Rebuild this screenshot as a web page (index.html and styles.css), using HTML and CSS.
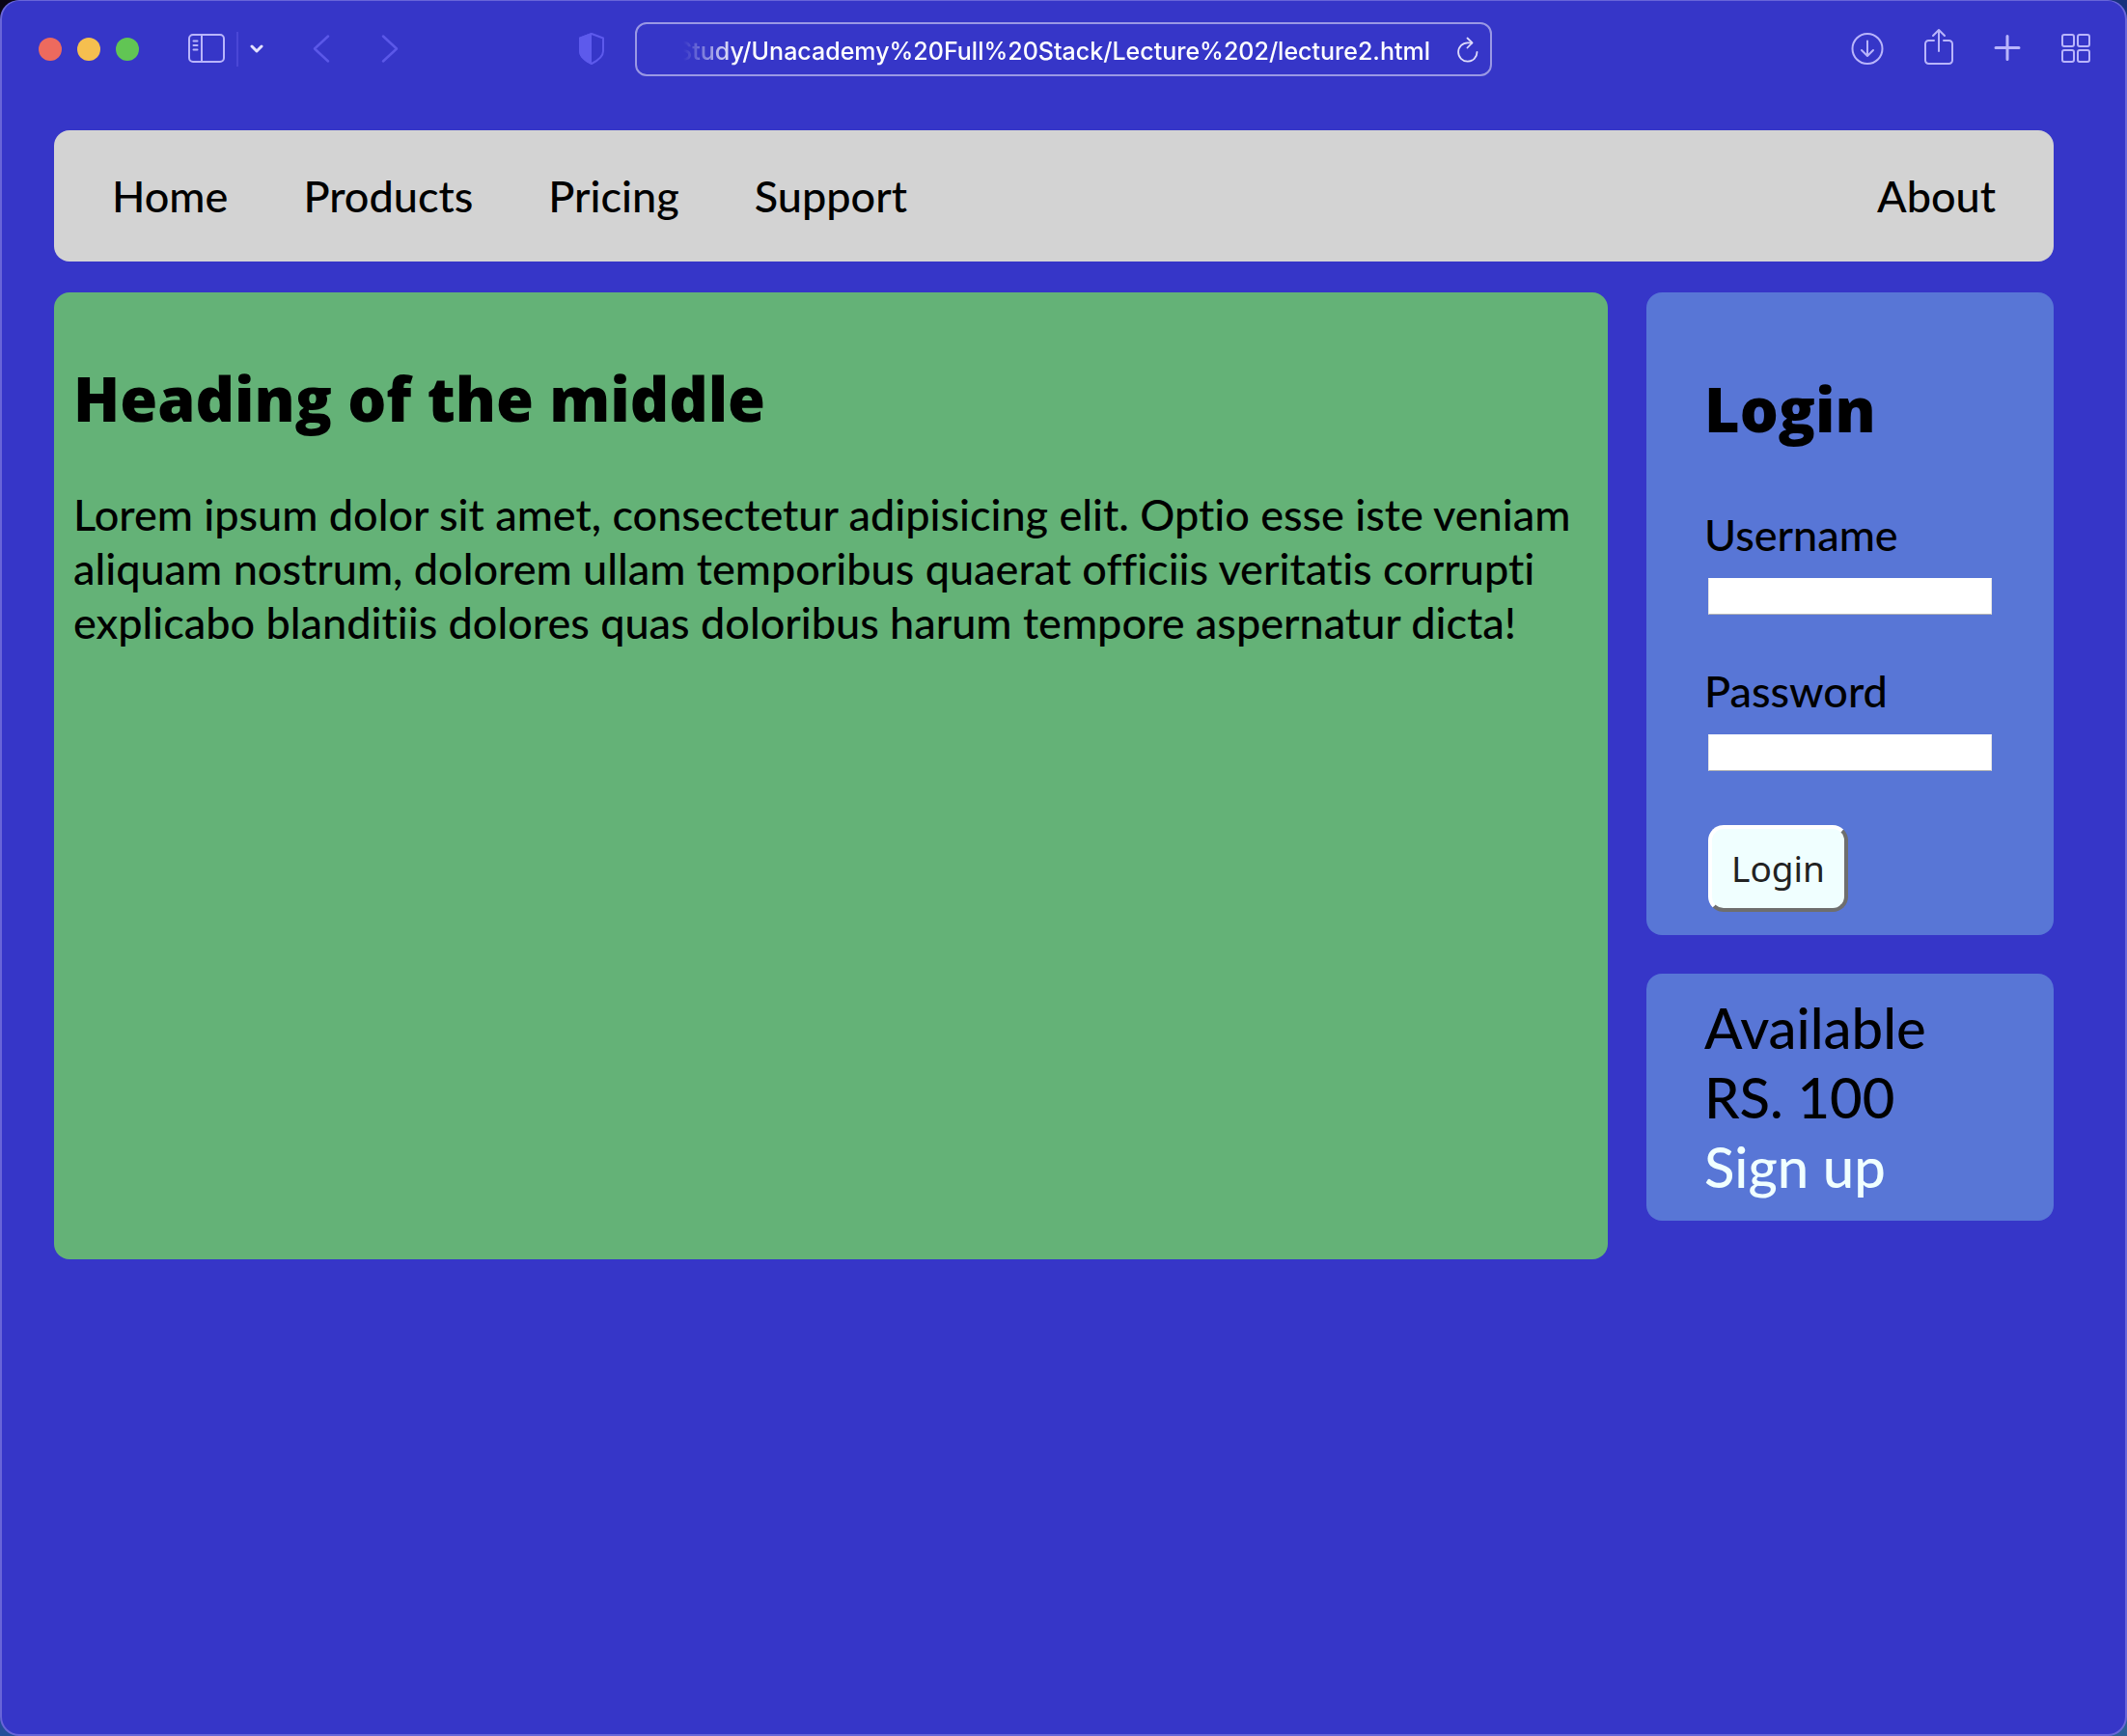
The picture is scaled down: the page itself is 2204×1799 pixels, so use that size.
FILE: index.html
```html
<!DOCTYPE html>
<html lang="en">
<head>
<meta charset="utf-8">
<title>Lecture 2</title>
<link rel="stylesheet" href="styles.css">
</head>
<body>
<div class="window">
  <header class="toolbar">
    <div class="tools tools-left">
      <div class="lights">
        <button class="light light-close" aria-label="Close"></button>
        <button class="light light-minimize" aria-label="Minimize"></button>
        <button class="light light-zoom" aria-label="Zoom"></button>
      </div>
      <div class="sidebar-tools">
        <button class="icon" aria-label="Sidebar">
          <svg width="38" height="44" viewBox="0 0 38 44" fill="none" stroke="#b9b5fb" stroke-width="2"><rect x="1" y="7" width="36" height="28" rx="4"/><path d="M14 7v28"/><path d="M5.500 13.500h4M5.500 18h4M5.500 22.500h4" stroke-linecap="round"/></svg>
        </button>
        <span class="separator"></span>
        <button class="icon" aria-label="Tab groups">
          <svg width="14" height="44" viewBox="0 0 14 44" fill="none" stroke="#e4e2ff" stroke-width="3" stroke-linecap="round" stroke-linejoin="round"><path d="M2 19l5 5 5-5"/></svg>
        </button>
      </div>
      <div class="history">
        <button class="icon" aria-label="Back">
          <svg width="18" height="44" viewBox="0 0 18 44" fill="none" stroke="#5b58e8" stroke-width="2.500" stroke-linecap="round" stroke-linejoin="round"><path d="M16 8.500L2 21.500l14 13"/></svg>
        </button>
        <button class="icon" aria-label="Forward">
          <svg width="18" height="44" viewBox="0 0 18 44" fill="none" stroke="#5b58e8" stroke-width="2.500" stroke-linecap="round" stroke-linejoin="round"><path d="M2 8.500l14 13-14 13"/></svg>
        </button>
      </div>
      <button class="icon shield" aria-label="Privacy report">
        <svg width="28" height="44" viewBox="0 0 28 44"><path d="M14 6L26 10.500v13.500c0 6-6 10-12 13-6-3-12-7-12-13V10.500z" fill="none" stroke="#5d5aec" stroke-width="2" stroke-linejoin="round"/><path d="M14 5L1 10v14c0 6.500 6.500 11 13 14z" fill="#5d5aec"/></svg>
      </button>
    </div>
    <div class="address">
      <input class="address-input" type="text" aria-label="Address" value="Study/Unacademy%20Full%20Stack/Lecture%202/lecture2.html">
      <button class="icon" aria-label="Reload">
        <svg width="22" height="44" viewBox="0 0 22 44" fill="none" stroke="#dedcfb" stroke-width="1.800" stroke-linecap="round" stroke-linejoin="round"><path d="M20.500 25a9.700 9.700 0 1 1-9.700-9.700h4.500"/><path d="M10.500 10.500l5 4.800-5 5.200"/></svg>
      </button>
    </div>
    <div class="tools tools-right">
      <button class="icon" aria-label="Downloads">
        <svg width="34" height="44" viewBox="0 0 34 44" fill="none" stroke="#b9b5fb" stroke-width="2" stroke-linecap="round" stroke-linejoin="round"><circle cx="17" cy="21.500" r="15.500"/><path d="M17 13.500v15M11 23l6 6 6-6"/></svg>
      </button>
      <button class="icon" aria-label="Share">
        <svg width="30" height="44" viewBox="0 0 30 44" fill="none" stroke="#b9b5fb" stroke-width="2" stroke-linecap="round" stroke-linejoin="round"><path d="M10 13H4.500A3.500 3.500 0 0 0 1 16.500v17A3.500 3.500 0 0 0 4.500 37h21a3.500 3.500 0 0 0 3.500-3.500v-17a3.500 3.500 0 0 0-3.500-3.500H20"/><path d="M15 24V2.500M9 8l6-6 6 6"/></svg>
      </button>
      <button class="icon" aria-label="New tab">
        <svg width="28" height="44" viewBox="0 0 28 44" fill="none" stroke="#b9b5fb" stroke-width="3" stroke-linecap="round"><path d="M14 8.500v24M2 20.500h24"/></svg>
      </button>
      <button class="icon" aria-label="Tab overview">
        <svg width="30" height="44" viewBox="0 0 30 44" fill="none" stroke="#b9b5fb" stroke-width="2"><rect x="1" y="7" width="12" height="12" rx="2"/><rect x="17" y="7" width="12" height="12" rx="2"/><rect x="1" y="23" width="12" height="12" rx="2"/><rect x="17" y="23" width="12" height="12" rx="2"/></svg>
      </button>
    </div>
  </header>

  <div class="page">
    <nav class="navbar">
      <a href="#home">Home</a>
      <a href="#products">Products</a>
      <a href="#pricing">Pricing</a>
      <a href="#support">Support</a>
      <a class="nav-about" href="#about">About</a>
    </nav>
    <div class="columns">
      <main class="middle">
        <h1 class="title">Heading of the middle</h1>
        <p class="text">Lorem ipsum dolor sit amet, consectetur adipisicing elit. Optio esse iste veniam aliquam nostrum, dolorem ullam temporibus quaerat officiis veritatis corrupti explicabo blanditiis dolores quas doloribus harum tempore aspernatur dicta!</p>
      </main>
      <aside class="side">
        <form class="card login">
          <h2 class="title">Login</h2>
          <label for="username">Username</label>
          <input class="field" id="username" type="text">
          <label for="password">Password</label>
          <input class="field" id="password" type="password">
          <button class="submit" type="button">Login</button>
        </form>
        <section class="card offer">
          <div>Available</div>
          <div>RS. 100</div>
          <a href="#signup">Sign up</a>
        </section>
      </aside>
    </div>
  </div>
</div>
</body>
</html>
```
FILE: styles.css
```css
* {
  box-sizing: border-box;
}

body {
  margin: 0;
  background: linear-gradient(160deg, #0a0414, #1c3f9c 40%, #2d6096);
  font-family: Lato, "Gill Sans", sans-serif;
  font-size: 45px;
  font-weight: 500;
  font-variant-ligatures: none;
  line-height: 56px;
  color: #000;
}

.window {
  min-height: 100vh;
  border: 2px solid #6865d8;
  border-top-width: 1px;
  border-radius: 20px;
  background: #3636c8;
}

button {
  margin: 0;
  padding: 0;
  border: 0;
  background: none;
}

a {
  color: inherit;
  text-decoration: none;
}

/* Browser toolbar */

.toolbar {
  display: grid;
  grid-template-columns: 1fr 888px 1fr;
  align-items: center;
  height: 100px;
}

.tools {
  display: flex;
  align-items: center;
}

.tools-left {
  padding: 0 31px 0 38px;
}

.tools-right {
  justify-content: flex-end;
  gap: 42px;
  padding-right: 36px;
}

.icon,
.icon svg {
  display: block;
}

.lights {
  display: flex;
  gap: 16px;
}

.light {
  width: 24px;
  height: 24px;
  border-radius: 50%;
}

.light-close {
  background: #ed6a5e;
}

.light-minimize {
  background: #f5bf4f;
}

.light-zoom {
  background: #61c554;
}

.sidebar-tools {
  display: flex;
  align-items: center;
  gap: 12px;
  margin-left: 51px;
}

.separator {
  width: 2px;
  height: 36px;
  background: #4a47d6;
}

.history {
  display: flex;
  gap: 53px;
  margin-left: 51px;
}

.shield {
  margin-left: auto;
}

.address {
  display: flex;
  align-items: center;
  gap: 28px;
  height: 56px;
  padding: 0 12px 0 30px;
  border: 2px solid #9a98e4;
  border-radius: 12px;
}

.address-input {
  flex: 1;
  min-width: 0;
  padding: 3px 0 0;
  border: 0;
  outline: 0;
  background: none;
  color: #fff;
  font: 500 25px/32px Inter, sans-serif;
  text-align: right;
  -webkit-mask-image: linear-gradient(90deg, transparent 18px, #000 75px);
  mask-image: linear-gradient(90deg, transparent 18px, #000 75px);
}

/* Page */

.page {
  padding: 34px 74px 32px 54px;
}

.navbar {
  display: flex;
  gap: 78px;
  padding: 40px 60px;
  border-radius: 16px;
  background: #d3d3d3;
}

.nav-about {
  margin-left: auto;
}

.columns {
  display: grid;
  grid-template-columns: 1fr 422px;
  align-items: start;
  gap: 40px;
  margin-top: 32px;
}

.middle {
  min-height: 1002px;
  padding: 74px 20px 20px;
  border-radius: 16px;
  background: #64b277;
}

.title {
  margin: 0;
  font-family: "Open Sans", sans-serif;
  font-size: 63px;
  line-height: 72px;
  font-weight: 800;
}

.text {
  margin: 56px 0 0;
}

.side {
  display: flex;
  flex-direction: column;
  gap: 40px;
}

.card {
  padding: 20px 60px;
  border-radius: 16px;
  background: #5876d6;
}

.login {
  display: flex;
  flex-direction: column;
  padding-top: 85px;
  padding-bottom: 24px;
}

.login .title {
  margin-bottom: 66px;
}

.field {
  height: 38px;
  margin: 17px 4px 51px;
  padding: 0 8px;
  border: 1px solid #e4e4e4;
  border-top-color: #fff;
  border-bottom-color: #b4b4b4;
  background: #fff;
  font: 24px/32px "Open Sans", sans-serif;
}

.submit {
  align-self: flex-start;
  height: 90px;
  margin: 5px 4px 0;
  padding: 0 20px;
  border: 4px solid;
  border-color: #fff #6e6e6e #6e6e6e #fff;
  border-radius: 16px;
  background: #f0ffff;
  color: #222;
  font: 37px/48px "Noto Sans", sans-serif;
}

.offer {
  font-size: 58px;
  line-height: 72px;
}

.offer a {
  color: #f0ffff;
}
```
